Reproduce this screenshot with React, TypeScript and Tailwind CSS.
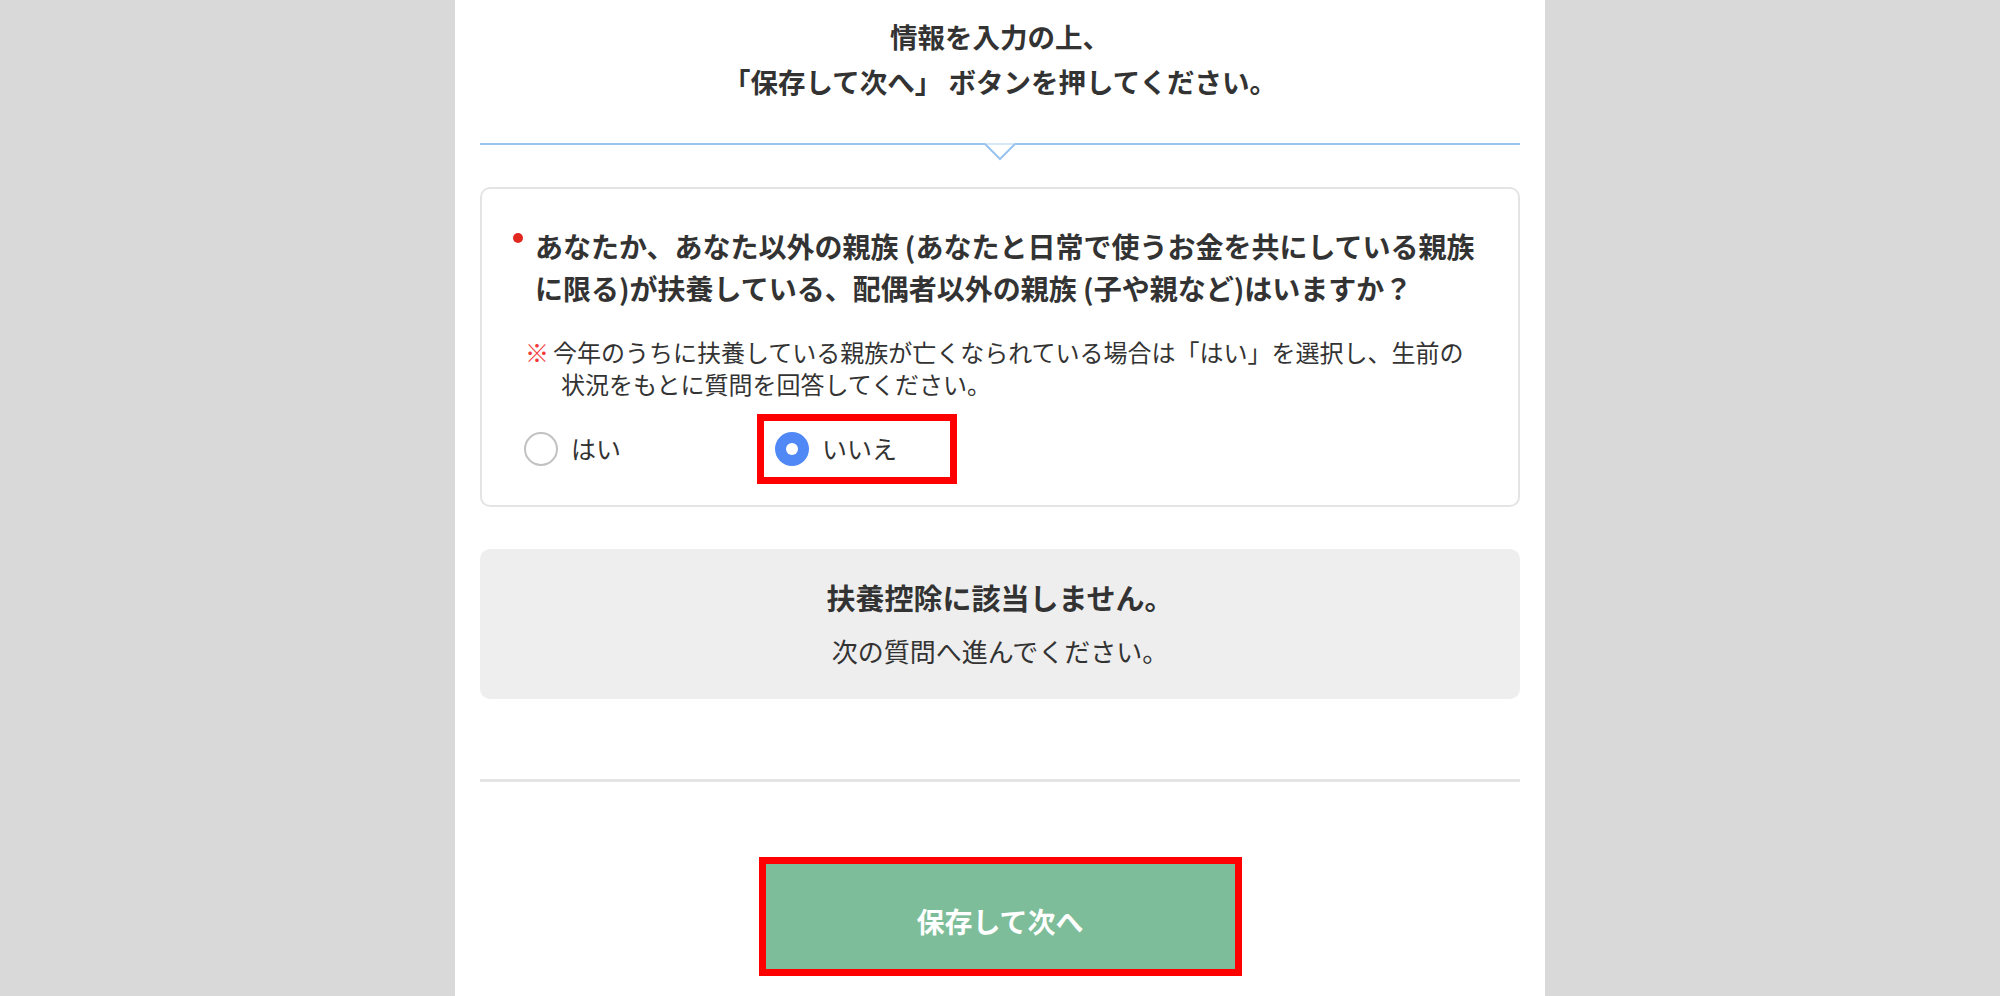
const font = { fontFamily: '"Noto Sans CJK JP", "Noto Sans", sans-serif' };

function Radio({ checked }: { checked?: boolean }) {
  if (checked) {
    return (
      <span className="flex h-[34px] w-[34px] shrink-0 items-center justify-center rounded-full bg-[#5088f5]">
        <span className="h-[12px] w-[12px] rounded-full bg-white" />
      </span>
    );
  }
  return <span className="h-[34px] w-[34px] shrink-0 rounded-full border-2 border-[#c2c2c2] bg-white" />;
}

export default function App() {
  return (
    <div className="flex min-h-screen justify-center bg-[#d9d9d9] text-[#333333]" style={font}>
      <div className="w-[1090px] bg-white px-[25px] pb-[21px]">
        {/* Heading */}
        <div className="pt-[14px] text-center text-[27.5px] font-bold leading-[45px]">
          <p>情報を入力の上、</p>
          <p>「保存して次へ」 ボタンを押してください。</p>
        </div>

        {/* Blue rule with arrow */}
        <div className="relative mt-[39px] h-[2px] bg-[#9ac3ee]">
          <svg
            className="absolute left-1/2 top-0 -translate-x-1/2"
            width="32"
            height="18"
            viewBox="0 0 32 18"
          >
            <polygon points="1,1 31,1 16,16" fill="#fff" />
            <path d="M1 1 L31 1" stroke="#d6e7f8" strokeWidth="2" />
            <path d="M1 1 L16 16 L31 1" stroke="#9ac3ee" strokeWidth="2" fill="none" />
          </svg>
        </div>

        {/* Question card */}
        <div className="mt-[42px] rounded-[10px] border-2 border-[#e4e4e4] px-[40px] pb-[21px] pt-[36px]">
          <div className="-ml-[9px] flex items-start">
            <span className="mr-[12px] mt-[8px] h-[10px] w-[10px] shrink-0 rounded-full bg-[#e0281f]" />
            <p className="text-[28px] font-bold leading-[42px]">
              あなたか、あなた以外の親族 (あなたと日常で使うお金を共にしている親族
              <br />
              に限る)が扶養している、配偶者以外の親族 (子や親など)はいますか？
            </p>
          </div>
          <p className="mt-[27px] pl-[39px] -indent-[36px] text-[24px] leading-[32px]">
            <span className="inline-block w-[28px] indent-0 text-[#f23a3a]">※</span>
            今年のうちに扶養している親族が亡くなられている場合は「はい」を選択し、生前の
            <br />
            状況をもとに質問を回答してください。
          </p>
          <div className="mt-[14px] flex items-center">
            <label className="flex w-[235px] items-center gap-[13px] pl-[2px] text-[25px]">
              <Radio />
              <span>はい</span>
            </label>
            <div className="flex h-[70px] w-[200px] items-center border-[7px] border-[#ff0000] pl-[11px]">
              <label className="flex items-center gap-[13px] text-[25px]">
                <Radio checked />
                <span>いいえ</span>
              </label>
            </div>
          </div>
        </div>

        {/* Result box */}
        <div className="mt-[42px] rounded-[10px] bg-[#eeeeee] pb-[29px] pt-[28px] text-center">
          <p className="text-[29px] font-bold leading-[40px]">扶養控除に該当しません。</p>
          <p className="mt-[15px] text-[26px] leading-[38px]">次の質問へ進んでください。</p>
        </div>

        <div className="mt-[80px] h-[3px] bg-[#e4e4e4]" />

        {/* Submit */}
        <div className="mt-[75px] flex justify-center">
          <div className="border-[7px] border-[#ff0000]">
            <button className="flex h-[105px] w-[469px] items-center justify-center bg-[#7dbd99] pt-[8px] text-[28px] font-bold text-white">
              保存して次へ
            </button>
          </div>
        </div>
      </div>
    </div>
  );
}
